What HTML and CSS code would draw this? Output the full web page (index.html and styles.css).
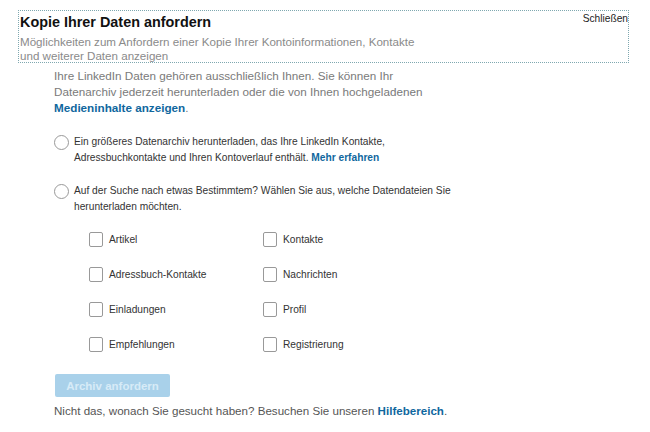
FILE: index.html
```html
<!DOCTYPE html>
<html lang="de">
<head>
<meta charset="utf-8">
<title>Kopie Ihrer Daten anfordern</title>
<link rel="stylesheet" href="styles.css">
</head>
<body>
<div class="header">
  <div class="header-top">
    <h1 class="title">Kopie Ihrer Daten anfordern</h1>
    <span class="close">Schließen</span>
  </div>
  <p class="subtitle">Möglichkeiten zum Anfordern einer Kopie Ihrer Kontoinformationen, Kontakte<br>und weiterer Daten anzeigen</p>
</div>
<div class="content">
  <p class="intro">Ihre LinkedIn Daten gehören ausschließlich Ihnen. Sie können Ihr<br>Datenarchiv jederzeit herunterladen oder die von Ihnen hochgeladenen<br><a class="link" href="#">Medieninhalte anzeigen</a>.</p>
  <div class="option first">
    <span class="radio"></span>
    <span class="option-text">Ein größeres Datenarchiv herunterladen, das Ihre LinkedIn Kontakte,<br>Adressbuchkontakte und Ihren Kontoverlauf enthält. <a class="link" href="#">Mehr erfahren</a></span>
  </div>
  <div class="option second">
    <span class="radio"></span>
    <span class="option-text">Auf der Suche nach etwas Bestimmtem? Wählen Sie aus, welche Datendateien Sie<br>herunterladen möchten.</span>
  </div>
  <div class="grid">
    <label class="check"><span class="box"></span>Artikel</label>
    <label class="check"><span class="box"></span>Kontakte</label>
    <label class="check"><span class="box"></span>Adressbuch-Kontakte</label>
    <label class="check"><span class="box"></span>Nachrichten</label>
    <label class="check"><span class="box"></span>Einladungen</label>
    <label class="check"><span class="box"></span>Profil</label>
    <label class="check"><span class="box"></span>Empfehlungen</label>
    <label class="check"><span class="box"></span>Registrierung</label>
  </div>
  <button class="btn" type="button">Archiv anfordern</button>
  <p class="footer">Nicht das, wonach Sie gesucht haben? Besuchen Sie unseren <a class="link" href="#">Hilfebereich</a>.</p>
</div>
</body>
</html>
```
FILE: styles.css
```css
html, body {
  margin: 0;
  padding: 0;
  background: #fff;
}
body {
  font-family: "Liberation Sans", Arial, sans-serif;
  padding-top: 10px;
}
.header {
  margin-left: 18px;
  width: 608px;
  height: 51px;
  border: 1px dotted #7fa8b0;
  padding: 0 0 0 1px;
  box-sizing: content-box;
}
.header-top {
  display: flex;
  justify-content: space-between;
  align-items: flex-start;
}
.title {
  margin: 0;
  font-size: 14.4px;
  line-height: 20px;
  font-weight: bold;
  color: #111;
  padding-top: 1px;
}
.close {
  font-size: 10.2px;
  line-height: 13px;
  color: #222;
  padding-top: 1px;
}
.subtitle {
  margin: 3px 0 0 0;
  font-size: 11.6px;
  line-height: 14px;
  color: #8a8a8a;
}
.content {
  margin-left: 54px;
}
.intro {
  margin: 5px 0 0 0;
  font-size: 11.7px;
  line-height: 16px;
  color: #7a7a7a;
}
.link {
  color: #10679e;
  font-weight: bold;
  text-decoration: none;
}
.option {
  display: flex;
  align-items: flex-start;
  gap: 5px;
  font-size: 10.2px;
  line-height: 16px;
  color: #333;
}
.option.first {
  margin-top: 18px;
}
.option.second {
  margin-top: 17px;
}
.radio {
  width: 13px;
  height: 13px;
  border: 1.5px solid #999;
  border-radius: 50%;
  margin-top: 1px;
  flex: none;
}
.grid {
  margin: 7px 0 0 35px;
  display: grid;
  grid-template-columns: 174px 174px;
  grid-auto-rows: 35px;
}
.check {
  display: flex;
  align-items: center;
  gap: 6px;
  font-size: 10.2px;
  color: #333;
}
.box {
  width: 12px;
  height: 13px;
  border: 1px solid #999;
  border-radius: 2px;
  flex: none;
}
.btn {
  display: block;
  margin-top: 12px;
  margin-left: 1px;
  width: 115px;
  height: 23px;
  border: none;
  border-radius: 2px;
  background: #a9d1ea;
  color: #d7ebf7;
  font-family: "Liberation Sans", Arial, sans-serif;
  font-size: 11.5px;
  font-weight: bold;
  padding: 0;
}
.footer {
  margin: 6px 0 0 0;
  font-size: 11.6px;
  line-height: 16px;
  color: #555;
}
```
